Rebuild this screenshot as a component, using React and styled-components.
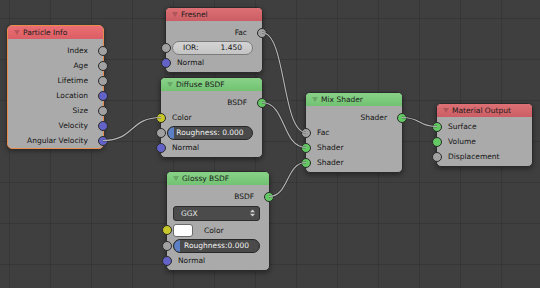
import styled, { createGlobalStyle } from "styled-components";

const GlobalStyle = createGlobalStyle`
    html, body {
        margin: 0;
        padding: 0;
        background: #3f3f3f;
    }
`;

const SOCKET = {
    float: "#a1a1a1",
    vector: "#6363c7",
    color: "#c7c729",
    shader: "#63c763",
};

// bezier endpoints, taken from node x / width and row centres
const links = [
    [103, 140.5, 161, 117.5],
    [262, 32.5, 306, 132.5],
    [262, 102.5, 306, 147.5],
    [269, 196.5, 306, 162.5],
    [402, 117.5, 437, 126.5],
];

const linkPath = ([x1, y1, x2, y2]) => {
    const d = Math.max((x2 - x1) * 0.55, 12);
    return `M${x1} ${y1} C${x1 + d} ${y1}, ${x2 - d} ${y2}, ${x2} ${y2}`;
};

const Canvas = styled.div`
    position: relative;
    width: 540px;
    height: 288px;
    overflow: hidden;
    background-color: #3f3f3f;
    background-image: linear-gradient(rgba(0, 0, 0, 0.12) 1px, transparent 1px),
        linear-gradient(90deg, rgba(0, 0, 0, 0.12) 1px, transparent 1px);
    background-size: 41px 41px;
    background-position: 9px 18px;
    font-family: "DejaVu Sans", "Liberation Sans", sans-serif;
    font-size: 7.5px;
    color: #141414;
`;

const LinkLayer = styled.svg`
    position: absolute;
    left: 0;
    top: 0;
    width: 540px;
    height: 288px;
    pointer-events: none;
    z-index: 2;

    path {
        fill: none;
    }
    path.shade {
        stroke: rgba(0, 0, 0, 0.3);
        stroke-width: 2.4;
    }
    path.wire {
        stroke: #b4b4b4;
        stroke-width: 1.2;
    }
`;

const Node = styled.div`
    position: absolute;
    left: ${(p) => p.$x}px;
    top: ${(p) => p.$y}px;
    width: ${(p) => p.$w}px;
    box-sizing: border-box;
    background: #aaaaaa;
    border: 1px solid ${(p) => (p.$selected ? "#e88c4e" : "#2a2a2a")};
    border-radius: 5px;
    padding-bottom: ${(p) => p.$pb ?? 2}px;
    box-shadow: 0 2px 5px rgba(0, 0, 0, 0.4);
    z-index: 1;
`;

const Header = styled.div`
    height: 13px;
    display: flex;
    align-items: center;
    gap: 3px;
    padding-left: 6px;
    border-radius: 4px 4px 0 0;
    background: ${(p) =>
        p.$kind === "shader"
            ? "linear-gradient(#88d288, #72c272)"
            : p.$kind === "selected"
            ? "linear-gradient(#ec6e72, #da5e65)"
            : "linear-gradient(#dc7074, #cb5e64)"};
    color: #1c1c1c;
    white-space: nowrap;
    margin-bottom: ${(p) => p.$gap ?? 4}px;
`;

const Arrow = styled.svg`
    width: 6px;
    height: 5px;
    flex: none;

    polygon {
        fill: rgba(0, 0, 0, 0.18);
    }
`;

const Row = styled.div`
    position: relative;
    height: ${(p) => p.$h ?? 15}px;
    display: flex;
    align-items: center;
    justify-content: ${(p) => (p.$out ? "flex-end" : "flex-start")};
    padding: ${(p) => (p.$field ? "0 9px 0 6px" : "0 15px 0 11px")};
    white-space: nowrap;
`;

const Socket = styled.span`
    position: absolute;
    top: 50%;
    ${(p) => (p.$out ? "right: -5px;" : "left: -5px;")}
    width: 8px;
    height: 8px;
    margin-top: -5px;
    border-radius: 50%;
    background: ${(p) => SOCKET[p.$type]};
    border: 1px solid #2a2a2a;
`;

const ValueField = styled.div`
    flex: 1;
    height: 12px;
    display: flex;
    align-items: center;
    justify-content: space-between;
    padding: 0 10px;
    border-radius: 7px;
    background: linear-gradient(#d4d4d4, #c4c4c4);
    border: 1px solid #7b7b7b;
    color: #151515;
`;

const Slider = styled.div`
    position: relative;
    flex: 1;
    height: 12px;
    display: flex;
    align-items: center;
    justify-content: center;
    border-radius: 7px;
    background: #4a4a4a;
    border: 1px solid #262626;
    color: #f2f2f2;
    overflow: hidden;

    &::before {
        content: "";
        position: absolute;
        left: 0;
        top: 0;
        bottom: 0;
        width: 6px;
        background: #5b80c6;
        border-radius: 7px 0 0 7px;
    }

    span {
        position: relative;
    }
`;

const Dropdown = styled.div`
    flex: 1;
    height: 13px;
    display: flex;
    align-items: center;
    justify-content: space-between;
    padding: 0 4px 0 7px;
    border-radius: 3px;
    background: #4b4b4b;
    border: 1px solid #2c2c2c;
    color: #e6e6e6;
`;

const Spinner = styled.svg`
    width: 5px;
    height: 8px;

    polygon {
        fill: #cfcfcf;
    }
`;

const Swatch = styled.div`
    width: 20px;
    height: 13px;
    border-radius: 3px;
    background: #ffffff;
    border: 1px solid #6a6a6a;
    box-sizing: border-box;
    margin-right: 11px;
`;

const Title = ({ kind, gap, children }) => (
    <Header $kind={kind} $gap={gap}>
        <Arrow viewBox="0 0 6 5">
            <polygon points="0,0 6,0 3,5" />
        </Arrow>
        {children}
    </Header>
);

const App = () => {
    return (
        <>
            <GlobalStyle />
            <Canvas>
                <LinkLayer viewBox="0 0 540 288">
                    {links.map((l, i) => (
                        <g key={i}>
                            <path className="shade" d={linkPath(l)} />
                            <path className="wire" d={linkPath(l)} />
                        </g>
                    ))}
                </LinkLayer>

                <Node $x={7} $y={25} $w={97} $selected $pb={0}>
                    <Title kind="selected">Particle Info</Title>
                    <Row $out>Index<Socket $out $type="float" /></Row>
                    <Row $out>Age<Socket $out $type="float" /></Row>
                    <Row $out>Lifetime<Socket $out $type="float" /></Row>
                    <Row $out>Location<Socket $out $type="vector" /></Row>
                    <Row $out>Size<Socket $out $type="float" /></Row>
                    <Row $out>Velocity<Socket $out $type="vector" /></Row>
                    <Row $out>Angular Velocity<Socket $out $type="vector" /></Row>
                </Node>

                <Node $x={165} $y={7} $w={98}>
                    <Title kind="input">Fresnel</Title>
                    <Row $out>Fac<Socket $out $type="float" /></Row>
                    <Row $field>
                        <Socket $type="float" />
                        <ValueField>
                            <span>IOR:</span>
                            <span>1.450</span>
                        </ValueField>
                    </Row>
                    <Row>Normal<Socket $type="vector" /></Row>
                </Node>

                <Node $x={160} $y={77} $w={103}>
                    <Title kind="shader">Diffuse BSDF</Title>
                    <Row $out>BSDF<Socket $out $type="shader" /></Row>
                    <Row>Color<Socket $type="color" /></Row>
                    <Row $field>
                        <Socket $type="float" />
                        <Slider><span>Roughness: 0.000</span></Slider>
                    </Row>
                    <Row>Normal<Socket $type="vector" /></Row>
                </Node>

                <Node $x={166} $y={171} $w={104}>
                    <Title kind="shader">Glossy BSDF</Title>
                    <Row $out>BSDF<Socket $out $type="shader" /></Row>
                    <Row $field $h={18}>
                        <Dropdown>
                            <span>GGX</span>
                            <Spinner viewBox="0 0 5 8">
                                <polygon points="0,3.3 5,3.3 2.5,0.5" />
                                <polygon points="0,4.7 5,4.7 2.5,7.5" />
                            </Spinner>
                        </Dropdown>
                    </Row>
                    <Row $field $h={16}>
                        <Socket $type="color" />
                        <Swatch />
                        Color
                    </Row>
                    <Row $field>
                        <Socket $type="float" />
                        <Slider><span>Roughness:0.000</span></Slider>
                    </Row>
                    <Row>Normal<Socket $type="vector" /></Row>
                </Node>

                <Node $x={305} $y={92} $w={98}>
                    <Title kind="shader">Mix Shader</Title>
                    <Row $out>Shader<Socket $out $type="shader" /></Row>
                    <Row>Fac<Socket $type="float" /></Row>
                    <Row>Shader<Socket $type="shader" /></Row>
                    <Row>Shader<Socket $type="shader" /></Row>
                </Node>

                <Node $x={436} $y={103} $w={97}>
                    <Title kind="input" gap={2}>Material Output</Title>
                    <Row>Surface<Socket $type="shader" /></Row>
                    <Row>Volume<Socket $type="shader" /></Row>
                    <Row>Displacement<Socket $type="float" /></Row>
                </Node>
            </Canvas>
        </>
    );
};

export default App;
